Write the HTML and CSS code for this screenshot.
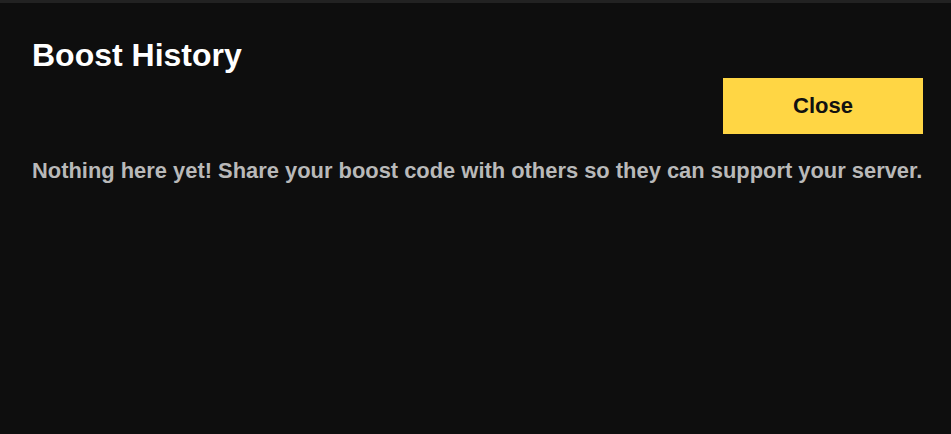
FILE: index.html
```html
<!DOCTYPE html>
<html lang="en">
<head>
<meta charset="utf-8">
<title>Boost History</title>
<link rel="stylesheet" href="styles.css">
</head>
<body>
<div class="backdrop-strip"></div>
<section class="modal">
  <h2 class="modal-title">Boost History</h2>
  <div class="modal-actions">
    <button class="btn-close" type="button">Close</button>
  </div>
  <p class="modal-empty">Nothing here yet! Share your boost code with others so they can support your server.</p>
</section>
</body>
</html>
```
FILE: styles.css
```css
html, body {
  margin: 0;
  padding: 0;
}
body {
  background: #0e0e0e;
  font-family: "Liberation Sans", Arial, sans-serif;
  width: 951px;
  height: 434px;
  overflow: hidden;
}
.backdrop-strip {
  height: 3px;
  background: #222222;
}
.modal {
  background: #0e0e0e;
  padding: 34px 28px 0 32px;
  display: flex;
  flex-direction: column;
}
.modal-title {
  margin: 0;
  font-size: 32px;
  font-weight: 700;
  line-height: 37px;
  color: #ffffff;
}
.modal-actions {
  display: flex;
  justify-content: flex-end;
  margin-top: 4px;
}
.btn-close {
  width: 200px;
  height: 56px;
  padding: 0;
  border: 0;
  border-radius: 0;
  background: #ffd644;
  color: #111111;
  font-family: "Liberation Sans", Arial, sans-serif;
  font-size: 22px;
  font-weight: 700;
  cursor: pointer;
}
.modal-empty {
  margin: 24px 0 0 0;
  font-size: 21.9px;
  font-weight: 700;
  line-height: 25px;
  color: #b9b9b9;
  white-space: nowrap;
}
```
